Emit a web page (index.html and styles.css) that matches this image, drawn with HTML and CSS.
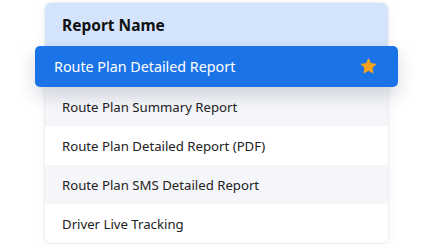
FILE: index.html
```html
<!DOCTYPE html>
<html>
<head>
<meta charset="utf-8">
<link rel="stylesheet" href="styles.css">
</head>
<body>
<div class="card">
  <div class="header">Report Name</div>
  <div class="row active">
    <span>Route Plan Detailed Report</span>
    <svg class="star" viewBox="0 0 24 24" width="19" height="19"><path d="M12 2.2l2.9 6.1 6.6.8-4.9 4.6 1.3 6.6L12 17l-5.9 3.3 1.3-6.6-4.9-4.6 6.6-.8z" fill="#f7a21b" stroke="#f7a21b" stroke-width="1" stroke-linejoin="round"/></svg>
  </div>
  <div class="row shade">Route Plan Summary Report</div>
  <div class="row">Route Plan Detailed Report (PDF)</div>
  <div class="row shade">Route Plan SMS Detailed Report</div>
  <div class="row">Driver Live Tracking</div>
</div>
</body>
</html>
```
FILE: styles.css
```css
html, body {
  margin: 0;
  padding: 0;
  background: #ffffff;
}
body {
  font-family: "Noto Sans", "Open Sans", sans-serif;
  color: #1f1f1f;
  padding: 2px 0 0 44px;
}
.card {
  width: 343px;
  border: 1px solid #eceef2;
  border-radius: 7px;
  box-shadow: 0 2px 10px rgba(0, 0, 0, 0.05);
  background: #fff;
}
.header {
  height: 43px;
  display: flex;
  align-items: center;
  padding-left: 17px;
  background: #d4e4fd;
  border-radius: 6px 6px 0 0;
  font-weight: 700;
  font-size: 15.5px;
  color: #111;
}
.row {
  height: 39px;
  display: flex;
  align-items: center;
  padding-left: 17px;
  font-size: 13.2px;
  color: #222;
}
.shade {
  background: #f5f6fa;
}
.active {
  height: 41px;
  margin: 0 -10px 0 -10px;
  padding: 0 20px 0 19px;
  background: #1b73e8;
  color: #fff;
  border-radius: 5px;
  justify-content: space-between;
  font-size: 14.3px;
  box-shadow: 0 8px 18px rgba(30, 40, 70, 0.18);
  position: relative;
}
.star {
  display: block;
}
```
